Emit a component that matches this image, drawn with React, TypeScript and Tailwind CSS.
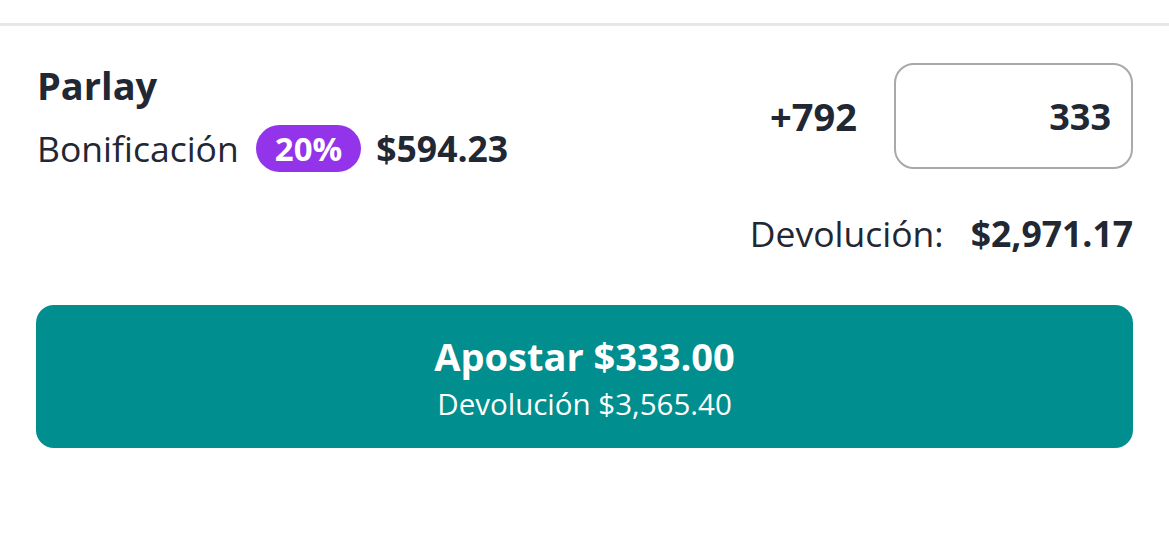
import React from "react";

export default function App() {
  return (
    <div className="w-[1169px] h-[543px] bg-white pt-[23px] font-['Open_Sans',sans-serif] text-[#222734]">
      <div className="border-t-[3px] border-[#e3e9ea] px-[36px] pt-[36px]">
        <div className="flex items-start justify-between">
          <div className="flex flex-col pl-[1px]">
            <h2 className="text-[38px] leading-[46px] font-bold">Parlay</h2>
            <div className="mt-[17px] flex items-center h-[47px]">
              <span className="text-[35.5px] leading-[47px]">Bonificación</span>
              <span className="ml-[17px] h-[47px] px-[19px] rounded-full bg-[#9333ea] text-white text-[33px] leading-[47px] font-bold">
                20%
              </span>
              <span className="ml-[15px] text-[35.5px] leading-[47px] font-bold">$594.23</span>
            </div>
          </div>
          <div className="flex items-center gap-[37px] pt-[1px]">
            <span className="text-[38px] leading-[106px] font-bold">+792</span>
            <div className="w-[239px] h-[106px] rounded-[20px] border-2 border-[#a8a8ad] flex items-center justify-end pr-[20px]">
              <span className="text-[36px] leading-[44px] font-bold pt-[2px]">333</span>
            </div>
          </div>
        </div>

        <div className="mt-[41px] flex justify-end items-center">
          <span className="text-[35.5px] leading-[40px]">Devolución:</span>
          <span className="ml-[27px] text-[35.5px] leading-[40px] font-bold">$2,971.17</span>
        </div>

        <button className="mt-[52px] w-full h-[143px] rounded-[18px] bg-[#008e8e] text-white flex flex-col items-center justify-center gap-[8px]">
          <span className="text-[38px] leading-[46px] font-bold">Apostar $333.00</span>
          <span className="text-[29.5px] leading-[34px]">Devolución $3,565.40</span>
        </button>
      </div>
    </div>
  );
}
